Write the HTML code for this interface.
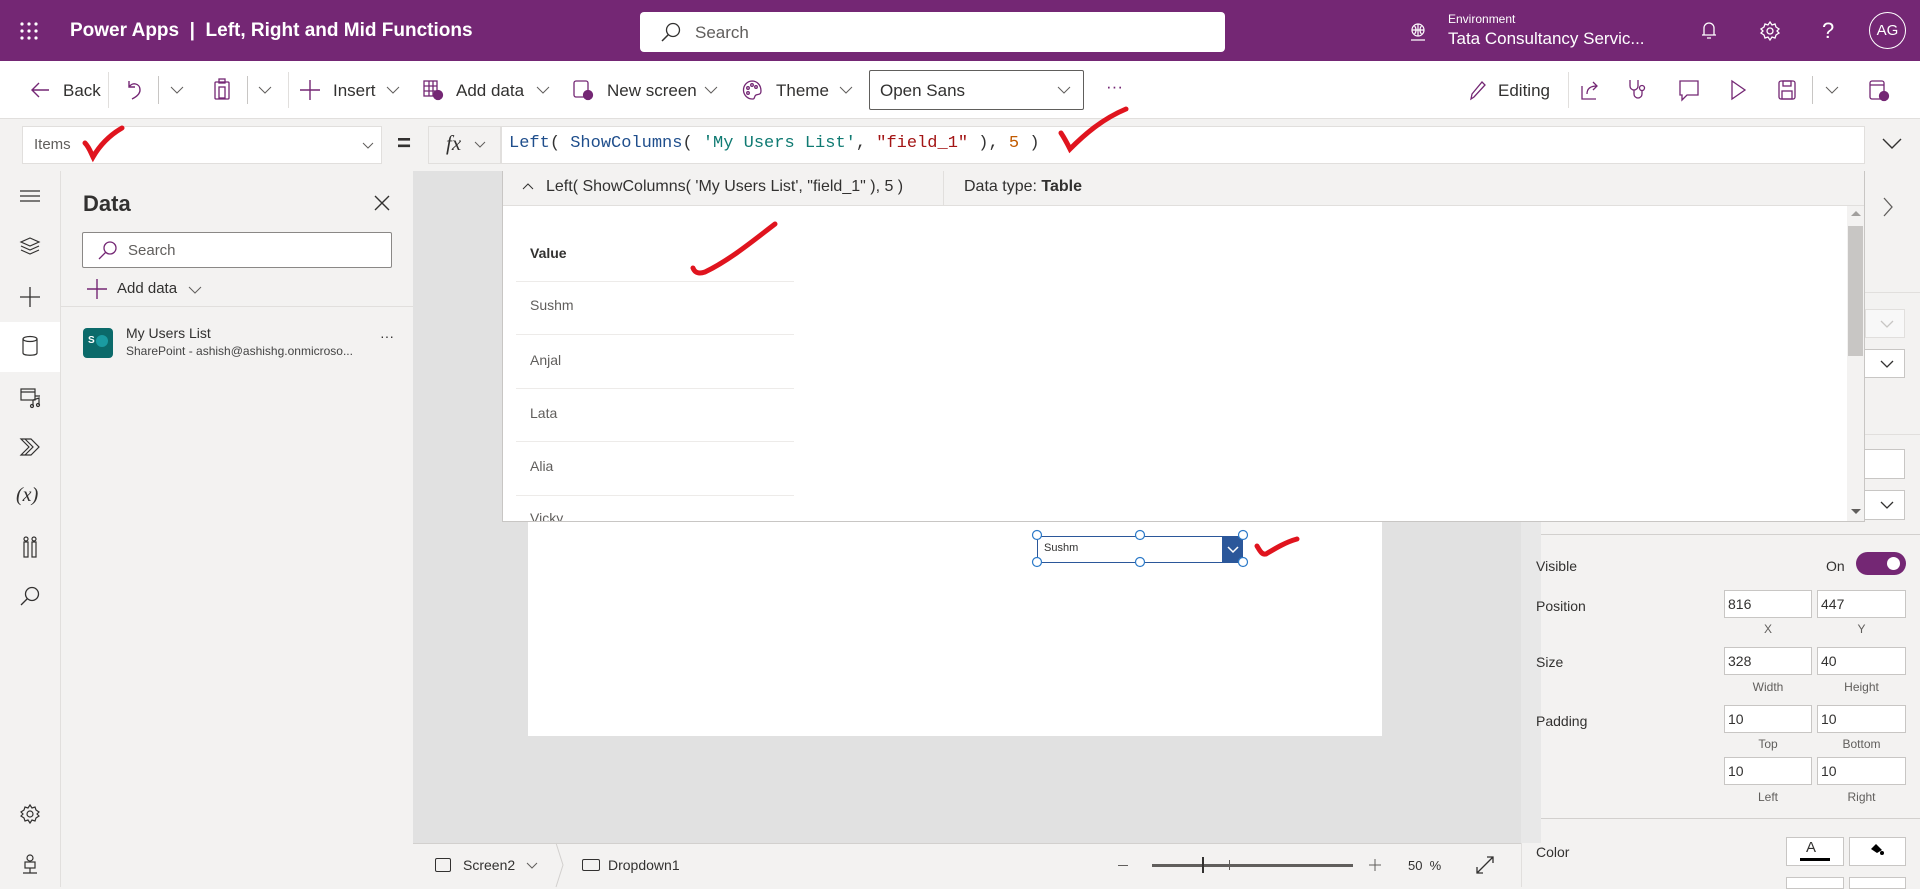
<!DOCTYPE html>
<html><head><meta charset="utf-8"><style>
*{box-sizing:border-box;margin:0;padding:0}
body{width:1920px;height:887px;overflow:hidden;position:relative;font-family:"Liberation Sans",sans-serif;background:#f3f2f1;color:#323130}
.a{position:absolute}
.t{position:absolute;white-space:nowrap}
svg{position:absolute;overflow:visible}
.box{position:absolute;background:#fff;border:1px solid #8a8886}
.lbl{position:absolute;font-size:12px;color:#605e5c;text-align:center}
</style></head><body>
<!-- top bar -->
<div class="a" style="left:0;top:0;width:1920px;height:61px;background:#742774"></div>
<svg style="left:20px;top:22px" width="20" height="20"><g fill="#fff"><circle cx="2" cy="2" r="1.6"/><circle cx="9" cy="2" r="1.6"/><circle cx="16" cy="2" r="1.6"/><circle cx="2" cy="9" r="1.6"/><circle cx="9" cy="9" r="1.6"/><circle cx="16" cy="9" r="1.6"/><circle cx="2" cy="16" r="1.6"/><circle cx="9" cy="16" r="1.6"/><circle cx="16" cy="16" r="1.6"/></g></svg>
<div class="t" style="left:70px;top:20px;font-size:19px;color:#fff;font-weight:bold">Power Apps &nbsp;|&nbsp; Left, Right and Mid Functions</div>
<div class="a" style="left:640px;top:12px;width:585px;height:40px;background:#fff;border-radius:4px"></div>
<svg style="left:660px;top:22px" width="22" height="22"><circle cx="13" cy="8" r="6.5" fill="none" stroke="#323130" stroke-width="1.3"/><path d="M8.5 12.5L2 19" stroke="#323130" stroke-width="1.5"/></svg>
<div class="t" style="left:695px;top:23px;font-size:17px;color:#605e5c">Search</div>
<svg style="left:1409px;top:23px" width="18" height="18" fill="none" stroke="#fff" stroke-width="1.2"><circle cx="9" cy="7" r="6"/><path d="M3 7h12M9 1v12M5.5 3c2 2 2 6 0 8M12.5 3c-2 2-2 6 0 8M2 17h14"/></svg>
<div class="t" style="left:1448px;top:12px;font-size:12px;color:#fff">Environment</div>
<div class="t" style="left:1448px;top:29px;font-size:17px;color:#fff">Tata Consultancy Servic...</div>
<svg style="left:1700px;top:21px" width="18" height="20" fill="none" stroke="#fff" stroke-width="1.3"><path d="M4 14V7a5 5 0 0 1 10 0v7zM2 14h14M7 17h4"/></svg>
<svg style="left:1760px;top:21px" width="20" height="20" fill="none" stroke="#fff" stroke-width="1.3"><circle cx="10" cy="10" r="3"/><path d="M10 1l2 3 3-1 1 3 3 2-2 2 2 2-3 2-1 3-3-1-2 3-2-3-3 1-1-3-3-2 2-2-2-2 3-2 1-3 3 1z"/></svg>
<div class="t" style="left:1822px;top:18px;font-size:22px;color:#fff">?</div>
<div class="a" style="left:1869px;top:12px;width:37px;height:37px;border:1px solid #fff;border-radius:50%;color:#fff;font-size:15px;text-align:center;line-height:35px">AG</div>
<!-- toolbar -->
<div class="a" style="left:0;top:61px;width:1920px;height:58px;background:#fff;border-bottom:1px solid #e1dfdd"></div>
<svg style="left:30px;top:81px" width="20" height="18" fill="none" stroke="#742774" stroke-width="1.4"><path d="M19 9H2M9 2L2 9l7 7"/></svg>
<div class="t" style="left:63px;top:81px;font-size:17px">Back</div>
<div class="a" style="left:108px;top:72px;width:1px;height:36px;background:#e1dfdd"></div>
<svg style="left:126px;top:80px" width="16" height="20" fill="none" stroke="#742774" stroke-width="1.4"><path d="M3 1v6h6M3 7c3-5 11-4 11 3 0 4-4 7-8 9"/></svg>
<div class="a" style="left:158px;top:76px;width:1px;height:28px;background:#c8c6c4"></div>
<svg style="left:170px;top:86px" width="14" height="8" fill="none" stroke="#605e5c"><path d="M1 1l6 6 6-6"/></svg>
<svg style="left:214px;top:78px" width="16" height="22" fill="none" stroke="#742774" stroke-width="1.3"><rect x="1" y="4" width="14" height="17" rx="1"/><rect x="5" y="1" width="6" height="4"/><rect x="5" y="9" width="6" height="11"/></svg>
<div class="a" style="left:247px;top:76px;width:1px;height:28px;background:#c8c6c4"></div>
<svg style="left:258px;top:86px" width="14" height="8" fill="none" stroke="#605e5c"><path d="M1 1l6 6 6-6"/></svg>
<div class="a" style="left:288px;top:72px;width:1px;height:36px;background:#e1dfdd"></div>
<svg style="left:300px;top:80px" width="20" height="20" stroke="#742774" stroke-width="1.4"><path d="M10 0v20M0 10h20"/></svg>
<div class="t" style="left:333px;top:81px;font-size:17px">Insert</div>
<svg style="left:386px;top:86px" width="14" height="8" fill="none" stroke="#605e5c"><path d="M1 1l6 6 6-6"/></svg>
<svg style="left:423px;top:80px" width="20" height="20" fill="none" stroke="#742774" stroke-width="1.3"><rect x="1" y="1" width="13" height="15"/><path d="M1 6h13M1 11h13M6 1v15M10 1v15"/><circle cx="15" cy="15" r="4.5" fill="#742774"/></svg>
<div class="t" style="left:456px;top:81px;font-size:17px">Add data</div>
<svg style="left:536px;top:86px" width="14" height="8" fill="none" stroke="#605e5c"><path d="M1 1l6 6 6-6"/></svg>
<svg style="left:573px;top:80px" width="20" height="20" fill="none" stroke="#742774" stroke-width="1.3"><rect x="1" y="1" width="14" height="16" rx="2"/><circle cx="15" cy="15" r="4.5" fill="#742774"/></svg>
<div class="t" style="left:607px;top:81px;font-size:17px">New screen</div>
<svg style="left:704px;top:86px" width="14" height="8" fill="none" stroke="#605e5c"><path d="M1 1l6 6 6-6"/></svg>
<svg style="left:742px;top:80px" width="20" height="20" fill="none" stroke="#742774" stroke-width="1.3"><path d="M10 1a9 9 0 1 0 1 18c2 0 1-3 3-4s5 0 5-4C19 5 15 1 10 1z"/><circle cx="6" cy="8" r="1.3"/><circle cx="10" cy="5" r="1.3"/><circle cx="14" cy="7" r="1.3"/><circle cx="6" cy="13" r="1.3"/></svg>
<div class="t" style="left:776px;top:81px;font-size:17px">Theme</div>
<svg style="left:839px;top:86px" width="14" height="8" fill="none" stroke="#605e5c"><path d="M1 1l6 6 6-6"/></svg>
<div class="a" style="left:869px;top:70px;width:215px;height:40px;border:1px solid #605e5c;border-radius:2px;background:#fff"></div>
<div class="t" style="left:880px;top:81px;font-size:17px">Open Sans</div>
<svg style="left:1057px;top:86px" width="14" height="8" fill="none" stroke="#605e5c"><path d="M1 1l6 6 6-6"/></svg>
<div class="t" style="left:1106px;top:77px;font-size:17px;color:#742774">···</div>
<svg style="left:1468px;top:80px" width="18" height="20" fill="none" stroke="#742774" stroke-width="1.3"><path d="M3 19l1-5L14 2l3 3L6 17z"/></svg>
<div class="t" style="left:1498px;top:81px;font-size:17px">Editing</div>
<div class="a" style="left:1568px;top:72px;width:1px;height:36px;background:#e1dfdd"></div>
<svg style="left:1581px;top:80px" width="20" height="20" fill="none" stroke="#742774" stroke-width="1.3"><path d="M1 6v13h14M6 14c0-6 4-8 10-8M12 2l4 4-4 4"/></svg>
<svg style="left:1628px;top:79px" width="20" height="22" fill="none" stroke="#742774" stroke-width="1.3"><path d="M2 1v6a4 4 0 0 0 8 0V1M6 11v4a4 4 0 0 0 8 0v-4"/><circle cx="14" cy="9" r="2.5"/></svg>
<svg style="left:1679px;top:80px" width="20" height="22" fill="none" stroke="#742774" stroke-width="1.3"><path d="M1 1h18v14H8l-5 5v-5H1z"/></svg>
<svg style="left:1730px;top:80px" width="16" height="20" fill="none" stroke="#742774" stroke-width="1.3"><path d="M2 1l13 9-13 9z"/></svg>
<svg style="left:1778px;top:80px" width="18" height="20" fill="none" stroke="#742774" stroke-width="1.3"><rect x="1" y="1" width="16" height="18" rx="2"/><rect x="5" y="1" width="8" height="5"/><rect x="4" y="11" width="10" height="8"/></svg>
<div class="a" style="left:1812px;top:76px;width:1px;height:28px;background:#c8c6c4"></div>
<svg style="left:1825px;top:86px" width="14" height="8" fill="none" stroke="#605e5c"><path d="M1 1l6 6 6-6"/></svg>
<svg style="left:1869px;top:80px" width="20" height="22" fill="none" stroke="#742774" stroke-width="1.3"><rect x="1" y="1" width="14" height="18" rx="2"/><path d="M1 5h14"/><circle cx="15" cy="16" r="4.5" fill="#742774"/></svg>
<!-- formula row -->
<div class="box" style="left:22px;top:126px;width:360px;height:38px;border-color:#e1dfdd"></div>
<div class="t" style="left:34px;top:136px;font-size:15px;color:#605e5c">Items</div>
<svg style="left:82px;top:127px" width="48" height="34"><path d="M3 16c4 4 6 10 8 14C18 18 28 8 40 1" fill="none" stroke="#e0141e" stroke-width="5" stroke-linecap="round"/></svg>
<svg style="left:362px;top:142px" width="12" height="7" fill="none" stroke="#605e5c"><path d="M1 1l5 5 5-5"/></svg>
<div class="t" style="left:397px;top:130px;font-size:24px;font-weight:bold">=</div>
<div class="a" style="left:428px;top:126px;width:73px;height:38px;background:#f3f2f1;border:1px solid #e1dfdd"></div>
<div class="t" style="left:446px;top:131px;font-size:21px;font-style:italic;font-family:'Liberation Serif',serif">fx</div>
<svg style="left:474px;top:141px" width="12" height="7" fill="none" stroke="#605e5c"><path d="M1 1l5 5 5-5"/></svg>
<div class="a" style="left:501px;top:126px;width:1364px;height:38px;background:#fff;border:1px solid #e1dfdd"></div>
<div class="t" style="left:509px;top:134px;font-size:17px;font-family:'Liberation Mono',monospace;color:#333">
<span style="color:#1f4e8c">Left</span>( <span style="color:#1f4e8c">ShowColumns</span>( <span style="color:#0f7a72">'My Users List'</span>, <span style="color:#a31515">"field_1"</span> ), <span style="color:#c15a00">5</span> )</div>
<svg style="left:1058px;top:107px" width="72" height="46"><path d="M3 26c4 6 7 12 9 16C26 28 44 12 68 2" fill="none" stroke="#e0141e" stroke-width="5" stroke-linecap="round"/></svg>
<svg style="left:1882px;top:138px" width="20" height="12" fill="none" stroke="#323130" stroke-width="1.4"><path d="M1 1l9 9 9-9"/></svg>
<!-- left rail -->
<div class="a" style="left:0;top:171px;width:61px;height:716px;background:#f3f2f1;border-right:1px solid #e1dfdd"></div>
<div class="a" style="left:0;top:322px;width:60px;height:50px;background:#fff"></div>
<svg style="left:20px;top:190px" width="20" height="12" stroke="#323130" stroke-width="1.2"><path d="M0 1h20M0 6h20M0 11h20"/></svg>
<svg style="left:20px;top:237px" width="20" height="18" fill="none" stroke="#323130" stroke-width="1.2"><path d="M10 1l9 4-9 4-9-4zM1 9l9 4 9-4M1 13l9 4 9-4"/></svg>
<svg style="left:20px;top:287px" width="20" height="20" stroke="#323130" stroke-width="1.3"><path d="M10 0v20M0 10h20"/></svg>
<svg style="left:22px;top:336px" width="16" height="20" fill="none" stroke="#323130" stroke-width="1.2"><ellipse cx="8" cy="3" rx="7" ry="2.5"/><path d="M1 3v14c0 3 14 3 14 0V3"/></svg>
<svg style="left:20px;top:388px" width="21" height="20" fill="none" stroke="#323130" stroke-width="1.2"><rect x="1" y="1" width="14" height="11"/><path d="M1 4h14M15 8h5M13 18V12l6-2v7"/><circle cx="12" cy="18" r="1.5"/><circle cx="18" cy="17" r="1.5"/></svg>
<svg style="left:20px;top:438px" width="20" height="18" fill="none" stroke="#323130" stroke-width="1.2"><path d="M1 1h10l8 8-8 8H1l8-8zM5 1l8 8-8 8"/></svg>
<div class="t" style="left:16px;top:484px;font-size:20px;font-style:italic;font-family:'Liberation Serif',serif">(<i>x</i>)</div>
<svg style="left:22px;top:536px" width="16" height="22" fill="none" stroke="#323130" stroke-width="1.2"><rect x="2" y="6" width="4" height="15"/><rect x="10" y="6" width="4" height="15"/><circle cx="4" cy="3" r="2"/><circle cx="12" cy="3" r="2"/></svg>
<svg style="left:20px;top:586px" width="20" height="20" fill="none" stroke="#323130" stroke-width="1.3"><circle cx="12" cy="8" r="6.5"/><path d="M7.5 12.5L1 19"/></svg>
<svg style="left:20px;top:804px" width="20" height="20" fill="none" stroke="#323130" stroke-width="1.2"><circle cx="10" cy="10" r="3"/><path d="M10 1l2 3 3-1 1 3 3 2-2 2 2 2-3 2-1 3-3-1-2 3-2-3-3 1-1-3-3-2 2-2-2-2 3-2 1-3 3 1z"/></svg>
<svg style="left:22px;top:854px" width="16" height="20" fill="none" stroke="#323130" stroke-width="1.2"><circle cx="8" cy="4" r="3"/><rect x="3" y="8" width="10" height="6"/><path d="M1 19h14M8 14v5"/></svg>
<!-- data panel -->
<div class="a" style="left:61px;top:171px;width:352px;height:716px;background:#f3f2f1"></div>
<div class="t" style="left:83px;top:191px;font-size:22px;font-weight:bold">Data</div>
<svg style="left:374px;top:195px" width="16" height="16" stroke="#323130" stroke-width="1.4"><path d="M1 1l14 14M15 1L1 15"/></svg>
<div class="box" style="left:82px;top:232px;width:310px;height:36px;border-radius:2px"></div>
<svg style="left:98px;top:240px" width="20" height="20" fill="none" stroke="#742774" stroke-width="1.3"><circle cx="12" cy="8" r="6"/><path d="M7.5 12.5L1 19"/></svg>
<div class="t" style="left:128px;top:242px;font-size:15px;color:#605e5c">Search</div>
<svg style="left:87px;top:279px" width="20" height="20" stroke="#742774" stroke-width="1.4"><path d="M10 0v20M0 10h20"/></svg>
<div class="t" style="left:117px;top:280px;font-size:15px">Add data</div>
<svg style="left:188px;top:286px" width="14" height="8" fill="none" stroke="#605e5c"><path d="M1 1l6 6 6-6"/></svg>
<div class="a" style="left:61px;top:306px;width:352px;height:1px;background:#e1dfdd"></div>
<div class="a" style="left:83px;top:328px;width:30px;height:30px;border-radius:4px;background:#0b6a6a"></div>
<div class="t" style="left:88px;top:335px;font-size:10px;color:#fff;font-weight:bold">S</div>
<div class="a" style="left:96px;top:335px;width:12px;height:12px;border-radius:50%;background:#1a9ba1"></div>
<div class="t" style="left:126px;top:325px;font-size:14px">My Users List</div>
<div class="t" style="left:126px;top:344px;font-size:12px;color:#444">SharePoint - ashish@ashishg.onmicroso...</div>
<div class="t" style="left:380px;top:328px;font-size:14px">···</div>
<!-- canvas area -->
<div class="a" style="left:413px;top:171px;width:1108px;height:672px;background:#e1e1e1"></div>
<div class="a" style="left:528px;top:171px;width:854px;height:565px;background:#fff"></div>
<!-- canvas dropdown -->
<div class="a" style="left:1037px;top:536px;width:206px;height:27px;border:1px solid #2b579a;background:#fff"></div>
<div class="a" style="left:1222px;top:536px;width:21px;height:27px;background:#2b579a"></div>
<svg style="left:1227px;top:546px" width="12" height="7" fill="none" stroke="#fff" stroke-width="1.5"><path d="M1 1l5 5 5-5"/></svg>
<div class="t" style="left:1044px;top:542px;font-size:11px">Sushm</div>
<svg style="left:1032px;top:530px" width="220" height="40" fill="#fff" stroke="#2b79c8" stroke-width="1.2"><circle cx="5" cy="5" r="4.5"/><circle cx="108" cy="5" r="4.5"/><circle cx="211" cy="5" r="4.5"/><circle cx="5" cy="32" r="4.5"/><circle cx="108" cy="32" r="4.5"/><circle cx="211" cy="32" r="4.5"/></svg>
<svg style="left:1254px;top:534px" width="50" height="25"><path d="M3 12c3 5 5 9 9 8 10-6 20-12 31-15" fill="none" stroke="#e0141e" stroke-width="5" stroke-linecap="round"/></svg>
<!-- right panel -->
<div class="a" style="left:1521px;top:171px;width:399px;height:716px;background:#f3f2f1;border-left:1px solid #e1dfdd"></div>
<svg style="left:1883px;top:197px" width="10" height="20" fill="none" stroke="#605e5c" stroke-width="1.3"><path d="M1 1l8 9-8 9"/></svg>
<div class="a" style="left:1865px;top:292px;width:55px;height:1px;background:#e1dfdd"></div>
<div class="a" style="left:1865px;top:309px;width:40px;height:29px;border:1px solid #e1dfdd;background:#f8f8f8"></div>
<svg style="left:1880px;top:320px" width="14" height="8" fill="none" stroke="#c8c6c4" stroke-width="1.3"><path d="M1 1l6 6 6-6"/></svg>
<div class="box" style="left:1865px;top:349px;width:40px;height:29px;border-color:#c8c6c4;border-left:none"></div>
<svg style="left:1880px;top:360px" width="14" height="8" fill="none" stroke="#323130" stroke-width="1.3"><path d="M1 1l6 6 6-6"/></svg>
<div class="a" style="left:1865px;top:434px;width:55px;height:1px;background:#e1dfdd"></div>
<div class="box" style="left:1865px;top:449px;width:40px;height:30px;border-color:#c8c6c4;border-left:none"></div>
<div class="box" style="left:1865px;top:490px;width:40px;height:30px;border-color:#c8c6c4;border-left:none"></div>
<svg style="left:1880px;top:501px" width="14" height="8" fill="none" stroke="#323130" stroke-width="1.3"><path d="M1 1l6 6 6-6"/></svg>
<div class="a" style="left:1521px;top:522px;width:20px;height:321px;background:#e8e8e8"></div>
<div class="a" style="left:1541px;top:534px;width:379px;height:1px;background:#d2d0ce"></div>
<div class="t" style="left:1536px;top:558px;font-size:14px">Visible</div>
<div class="t" style="left:1826px;top:558px;font-size:14px">On</div>
<div class="a" style="left:1856px;top:552px;width:50px;height:23px;border-radius:12px;background:#742774"></div>
<div class="a" style="left:1887px;top:557px;width:13px;height:13px;border-radius:50%;background:#fff"></div>
<div class="t" style="left:1536px;top:598px;font-size:14px">Position</div>
<div class="box" style="left:1724px;top:590px;width:88px;height:28px;border-color:#c8c6c4"></div>
<div class="box" style="left:1817px;top:590px;width:89px;height:28px;border-color:#c8c6c4"></div>
<div class="t" style="left:1728px;top:596px;font-size:14px">816</div>
<div class="t" style="left:1821px;top:596px;font-size:14px">447</div>
<div class="lbl" style="left:1724px;top:622px;width:88px">X</div>
<div class="lbl" style="left:1817px;top:622px;width:89px">Y</div>
<div class="t" style="left:1536px;top:654px;font-size:14px">Size</div>
<div class="box" style="left:1724px;top:647px;width:88px;height:28px;border-color:#c8c6c4"></div>
<div class="box" style="left:1817px;top:647px;width:89px;height:28px;border-color:#c8c6c4"></div>
<div class="t" style="left:1728px;top:653px;font-size:14px">328</div>
<div class="t" style="left:1821px;top:653px;font-size:14px">40</div>
<div class="lbl" style="left:1724px;top:680px;width:88px">Width</div>
<div class="lbl" style="left:1817px;top:680px;width:89px">Height</div>
<div class="t" style="left:1536px;top:713px;font-size:14px">Padding</div>
<div class="box" style="left:1724px;top:705px;width:88px;height:28px;border-color:#c8c6c4"></div>
<div class="box" style="left:1817px;top:705px;width:89px;height:28px;border-color:#c8c6c4"></div>
<div class="t" style="left:1728px;top:711px;font-size:14px">10</div>
<div class="t" style="left:1821px;top:711px;font-size:14px">10</div>
<div class="lbl" style="left:1724px;top:737px;width:88px">Top</div>
<div class="lbl" style="left:1817px;top:737px;width:89px">Bottom</div>
<div class="box" style="left:1724px;top:757px;width:88px;height:28px;border-color:#c8c6c4"></div>
<div class="box" style="left:1817px;top:757px;width:89px;height:28px;border-color:#c8c6c4"></div>
<div class="t" style="left:1728px;top:763px;font-size:14px">10</div>
<div class="t" style="left:1821px;top:763px;font-size:14px">10</div>
<div class="lbl" style="left:1724px;top:790px;width:88px">Left</div>
<div class="lbl" style="left:1817px;top:790px;width:89px">Right</div>
<div class="a" style="left:1541px;top:818px;width:379px;height:1px;background:#d2d0ce"></div>
<div class="t" style="left:1536px;top:844px;font-size:14px">Color</div>
<div class="box" style="left:1786px;top:837px;width:58px;height:29px;border-color:#c8c6c4"></div>
<div class="t" style="left:1806px;top:839px;font-size:15px">A</div>
<div class="a" style="left:1800px;top:858px;width:30px;height:3px;background:#000"></div>
<div class="box" style="left:1849px;top:837px;width:57px;height:29px;border-color:#c8c6c4"></div>
<svg style="left:1869px;top:842px" width="16" height="14" fill="#000"><path d="M2 7l5-5 6 6-5 3z"/><circle cx="13" cy="11" r="2"/></svg>
<div class="box" style="left:1786px;top:877px;width:58px;height:12px;border-color:#c8c6c4"></div>
<div class="box" style="left:1849px;top:877px;width:57px;height:12px;border-color:#c8c6c4"></div>
<!-- popup (on top) -->
<div class="a" style="left:502px;top:171px;width:1363px;height:351px;background:#fff;border:1px solid #c8c6c4"></div>
<div class="a" style="left:503px;top:171px;width:1361px;height:35px;background:#f3f2f1;border-bottom:1px solid #e1dfdd"></div>
<svg style="left:522px;top:183px" width="12" height="7" fill="none" stroke="#323130"><path d="M1 6l5-5 5 5"/></svg>
<div class="t" style="left:546px;top:178px;font-size:16px">Left( ShowColumns( 'My Users List', "field_1" ), 5 )</div>
<div class="a" style="left:943px;top:171px;width:1px;height:35px;background:#e1dfdd"></div>
<div class="t" style="left:964px;top:178px;font-size:16px">Data type: <b>Table</b></div>
<div class="t" style="left:530px;top:245px;font-size:14px;font-weight:bold">Value</div>
<div class="a" style="left:516px;top:281px;width:278px;height:1px;background:#edebe9"></div>
<div class="a" style="left:516px;top:334px;width:278px;height:1px;background:#edebe9"></div>
<div class="a" style="left:516px;top:388px;width:278px;height:1px;background:#edebe9"></div>
<div class="a" style="left:516px;top:441px;width:278px;height:1px;background:#edebe9"></div>
<div class="a" style="left:516px;top:495px;width:278px;height:1px;background:#edebe9"></div>
<div class="t" style="left:530px;top:297px;font-size:14px;color:#605e5c">Sushm</div>
<div class="t" style="left:530px;top:352px;font-size:14px;color:#605e5c">Anjal</div>
<div class="t" style="left:530px;top:405px;font-size:14px;color:#605e5c">Lata</div>
<div class="t" style="left:530px;top:458px;font-size:14px;color:#605e5c">Alia</div>
<div class="a" style="left:503px;top:508px;width:300px;height:13px;overflow:hidden"><div class="t" style="left:27px;top:2px;font-size:14px;color:#605e5c">Vicky</div></div>
<svg style="left:686px;top:220px" width="96" height="58"><path d="M7 48c2 5 6 6 12 4C44 40 68 20 89 4" fill="none" stroke="#e0141e" stroke-width="5" stroke-linecap="round"/></svg>
<div class="a" style="left:1847px;top:206px;width:17px;height:315px;background:#f3f2f1"></div>
<div class="a" style="left:1848px;top:226px;width:15px;height:130px;background:#c8c6c4"></div>
<svg style="left:1851px;top:210px" width="10" height="6" fill="#a19f9d"><path d="M0 6l5-5 5 5z"/></svg>
<svg style="left:1851px;top:509px" width="10" height="6" fill="#605e5c"><path d="M0 0l5 5 5-5z"/></svg>
<!-- bottom bar -->
<div class="a" style="left:413px;top:843px;width:1108px;height:44px;background:#f3f2f1;border-top:1px solid #d2d0ce"></div>
<div class="a" style="left:435px;top:858px;width:16px;height:14px;border:1.3px solid #323130;border-radius:2px"></div>
<div class="t" style="left:463px;top:857px;font-size:14px">Screen2</div>
<svg style="left:526px;top:862px" width="12" height="7" fill="none" stroke="#605e5c"><path d="M1 1l5 5 5-5"/></svg>
<svg style="left:555px;top:843px" width="10" height="44" fill="none" stroke="#d2d0ce"><path d="M1 0l7 22-7 22"/></svg>
<div class="a" style="left:582px;top:859px;width:18px;height:12px;border:1.3px solid #323130;border-radius:2px"></div>
<div class="t" style="left:608px;top:857px;font-size:14px">Dropdown1</div>
<div class="a" style="left:1118px;top:865px;width:10px;height:1px;background:#605e5c"></div>
<div class="a" style="left:1152px;top:864px;width:201px;height:3px;background:#605e5c"></div>
<div class="a" style="left:1202px;top:857px;width:2px;height:16px;background:#323130"></div>
<div class="a" style="left:1229px;top:860px;width:1px;height:10px;background:#605e5c"></div>
<svg style="left:1369px;top:859px" width="12" height="12" stroke="#605e5c"><path d="M6 0v12M0 6h12"/></svg>
<div class="t" style="left:1408px;top:858px;font-size:13px">50 &nbsp;%</div>
<svg style="left:1476px;top:856px" width="18" height="18" fill="none" stroke="#323130" stroke-width="1.3"><path d="M1 17L17 1M11 1h6v6M1 11v6h6"/></svg>
</body></html>
